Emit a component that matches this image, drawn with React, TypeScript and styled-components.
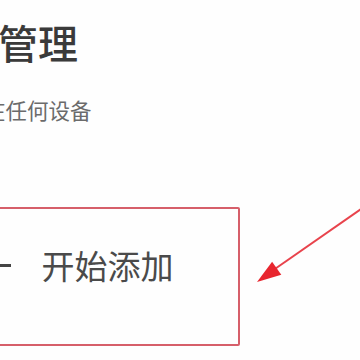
import React from "react";
import styled, { createGlobalStyle } from "styled-components";

const GlobalStyle = createGlobalStyle`
  html, body {
    margin: 0;
    padding: 0;
    background: #ffffff;
  }
  body {
    font-family: "Noto Sans CJK SC", "Noto Sans", sans-serif;
  }
`;

const Screen = styled.div`
  position: relative;
  width: 360px;
  height: 360px;
  overflow: hidden;
  background: #fefefe;
`;

const Content = styled.div`
  display: flex;
  flex-direction: column;
  align-items: flex-start;
  padding-top: 18px;
`;

const Title = styled.h1`
  margin: 0 0 0 -2px;
  font-size: 40px;
  line-height: 48px;
  font-weight: 500;
  color: #3a3a3a;
  white-space: nowrap;
`;

const Subtitle = styled.p`
  margin: 30px 0 0 -16px;
  font-size: 21.5px;
  line-height: 28px;
  color: #6b6b6b;
  white-space: nowrap;
`;

const AddCard = styled.div`
  box-sizing: border-box;
  margin: 83px 0 0 -30px;
  width: 270px;
  height: 139px;
  border: 2.5px solid #d65f6a;
  border-radius: 2px;
  display: flex;
  align-items: center;
  gap: 31px;
  padding: 0 0 23px 6.5px;
`;

const PlusIcon = styled.span`
  position: relative;
  width: 32px;
  height: 32px;
  flex: none;

  &::before,
  &::after {
    content: "";
    position: absolute;
    background: #444444;
  }
  &::before {
    left: 0;
    right: 0;
    top: 14.5px;
    height: 3px;
  }
  &::after {
    top: 0;
    bottom: 0;
    left: 14.5px;
    width: 3px;
  }
`;

const AddLabel = styled.span`
  font-size: 33px;
  line-height: 40px;
  color: #4a4a4a;
  white-space: nowrap;
`;

const Annotation = styled.svg`
  position: absolute;
  inset: 0;
  pointer-events: none;
`;

export default function App() {
  return (
    <>
      <GlobalStyle />
      <Screen>
        <Content>
          <Title>管理</Title>
          <Subtitle>在任何设备</Subtitle>
          <AddCard>
            <PlusIcon />
            <AddLabel>开始添加</AddLabel>
          </AddCard>
        </Content>
        <Annotation width="360" height="360" viewBox="0 0 360 360">
          <line x1="364" y1="207" x2="272" y2="271" stroke="#e8434c" strokeWidth="2" />
          <polygon points="257,282 281.3,274.8 272.1,261.7" fill="#e8262f" />
        </Annotation>
      </Screen>
    </>
  );
}
